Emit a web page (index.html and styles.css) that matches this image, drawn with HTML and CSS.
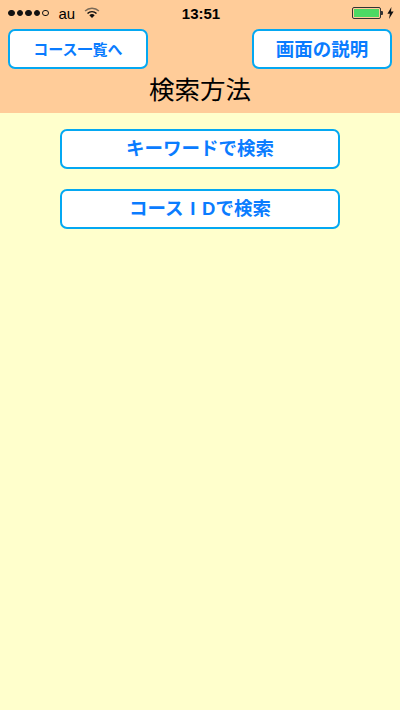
FILE: index.html
```html
<!DOCTYPE html>
<html lang="ja">
<head>
    <meta charset="UTF-8">
    <meta name="viewport" content="width=device-width, initial-scale=1.0">
    <title>検索方法</title>
    <link rel="stylesheet" href="styles.css">
</head>
<body>
    <div class="header">
        <div class="statusbar">
            <div class="status-left">
                <span class="dots">
                    <i class="dot"></i><i class="dot"></i><i class="dot"></i><i class="dot"></i><i class="dot empty"></i>
                </span>
                <span class="carrier">au</span>
                <svg class="wifi" width="16" height="12" viewBox="0 0 16 12">
                    <path d="M0.6 3.6a10.5 10.5 0 0 1 14.8 0l-1 1a9.1 9.1 0 0 0-12.8 0z" fill="#7a6a58"/>
                    <path d="M3 6a7.1 7.1 0 0 1 10 0l-1 1a5.7 5.7 0 0 0-8 0z" fill="#111"/>
                    <path d="M5.3 8.3a3.8 3.8 0 0 1 5.4 0L8 11z" fill="#111"/>
                </svg>
            </div>
            <div class="clock">13:51</div>
            <div class="status-right">
                <span class="battery"><span class="battery-level"></span></span>
                <span class="battery-tip"></span>
                <svg class="bolt" width="7" height="12" viewBox="0 0 7 12">
                    <path d="M4.4 0L0.4 6.8h2.5L2 12l4.6-7.4H4z" fill="#111"/>
                </svg>
            </div>
        </div>
        <div class="nav-buttons">
            <a class="btn btn-small" href="#">コース一覧へ</a>
            <a class="btn btn-help" href="#">画面の説明</a>
        </div>
        <h1>検索方法</h1>
    </div>

    <div class="container">
        <a class="btn btn-wide" href="#">キーワードで検索</a>
        <a class="btn btn-wide" href="#"><span>コース<span class="wide-char">I</span>Dで検索</span></a>
    </div>
</body>
</html>
```

FILE: styles.css
```css
html, body {
    height: 100%;
}
body {
    margin: 0;
    display: flex;
    flex-direction: column;
    background-color: #ffffcc;
    font-family: "Liberation Sans", "Noto Sans CJK JP", sans-serif;
    color: #000;
    overflow: hidden;
}
.header {
    height: 113px;
    background-color: #ffcc99;
}
.statusbar {
    height: 29px;
    padding: 0 6px 3px 8px;
    display: grid;
    grid-template-columns: 1fr auto 1fr;
    align-items: center;
    box-sizing: border-box;
}
.status-left {
    display: flex;
    align-items: center;
}
.dots {
    display: flex;
    gap: 2px;
}
.dot {
    width: 6.5px;
    height: 6.5px;
    border: 1px solid #111;
    border-radius: 50%;
    background-color: #111;
    box-sizing: border-box;
}
.dot.empty {
    background-color: transparent;
}
.carrier {
    margin-left: 10px;
    font-size: 15px;
}
.wifi {
    margin-left: 9px;
}
.clock {
    font-size: 15px;
    font-weight: bold;
}
.status-right {
    display: flex;
    align-items: center;
    justify-content: flex-end;
}
.battery {
    width: 29px;
    height: 12px;
    padding: 1px;
    border: 1px solid #333;
    border-radius: 2px;
    box-sizing: border-box;
    display: flex;
}
.battery-level {
    flex: 1;
    background-color: #4cd964;
}
.battery-tip {
    width: 2px;
    height: 4px;
    background-color: #333;
    border-radius: 0 1px 1px 0;
}
.bolt {
    margin-left: 4px;
}
.nav-buttons {
    display: flex;
    justify-content: space-between;
    padding: 0 8px;
}
.btn {
    display: flex;
    align-items: center;
    justify-content: center;
    height: 40px;
    padding-bottom: 2px;
    box-sizing: border-box;
    background-color: #fff;
    border: 2px solid #04a8f2;
    border-radius: 7px;
    color: #0a7cff;
    font-weight: bold;
    text-decoration: none;
}
.btn-small {
    width: 140px;
    font-size: 15px;
}
.btn-help {
    width: 140px;
    font-size: 18.5px;
}
.btn-wide {
    width: 280px;
    padding-bottom: 4px;
    font-size: 18.5px;
}
.wide-char {
    display: inline-block;
    width: 1em;
    text-align: center;
}
h1 {
    margin: 3px 0 0;
    font-size: 25.5px;
    font-weight: normal;
    line-height: 36px;
    text-align: center;
}
.container {
    display: flex;
    flex-direction: column;
    align-items: center;
    gap: 20px;
    padding-top: 16px;
}
```
